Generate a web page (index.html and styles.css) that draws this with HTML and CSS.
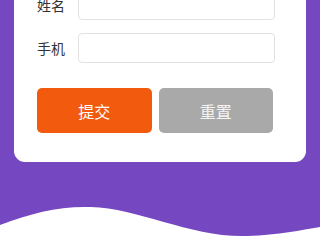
FILE: index.html
```html
<!DOCTYPE html>
<html lang="zh">
<head>
<meta charset="utf-8">
<link rel="stylesheet" href="styles.css">
</head>
<body>
<div class="page">
  <form class="card">
    <div class="row">
      <label class="label">姓名</label>
      <input class="input" type="text">
    </div>
    <div class="row">
      <label class="label">手机</label>
      <input class="input" type="text">
    </div>
    <div class="actions">
      <button type="button" class="btn btn-submit">提交</button>
      <button type="button" class="btn btn-reset">重置</button>
    </div>
  </form>
  <svg class="wave" viewBox="0 0 300 35" preserveAspectRatio="none">
    <path d="M0,20 C30,8 55,1 85,2 C130,3 180,33 232,31 C262,30 282,25 300,22 L300,35 L0,35 Z" fill="#ffffff"/>
  </svg>
</div>
</body>
</html>
```
FILE: styles.css
```css
* { box-sizing: border-box; }
html {
  background: #7548c2;
}
html, body {
  margin: 0;
  padding: 0;
}
body {
  overflow: hidden;
  font-family: "Noto Sans CJK SC", "Noto Sans", sans-serif;
}
.page {
  display: flex;
  flex-direction: column;
  height: 100vh;
}
.card {
  margin: -40px 14px 0 14px;
  background: #ffffff;
  border-radius: 0 0 11px 11px;
  padding: 30px 31px 29px 23px;
  display: flex;
  flex-direction: column;
  gap: 13px;
}
.row {
  display: flex;
  align-items: center;
  gap: 13px;
}
.label {
  width: 28px;
  font-size: 14px;
  color: #333333;
  white-space: nowrap;
  line-height: 1;
}
.input {
  flex: 1;
  min-width: 0;
  height: 30px;
  border: 1px solid #e2e2e2;
  border-radius: 4px;
  background: #fff;
  margin: 0;
  padding: 0 8px;
  outline: none;
}
.actions {
  display: flex;
  gap: 7px;
  margin-top: 12px;
  margin-right: 2px;
}
.btn {
  flex: 1;
  height: 45px;
  border: none;
  border-radius: 5px;
  color: #ffffff;
  font-family: "Noto Sans CJK SC", "Noto Sans", sans-serif;
  font-size: 16px;
  padding: 0;
}
.btn-submit { background: #f25a0e; }
.btn-reset { background: #a9a9a9; color: #f4f4f4; }
.wave {
  display: block;
  margin-top: auto;
  width: 100%;
  height: 35px;
  flex-shrink: 0;
}
```
